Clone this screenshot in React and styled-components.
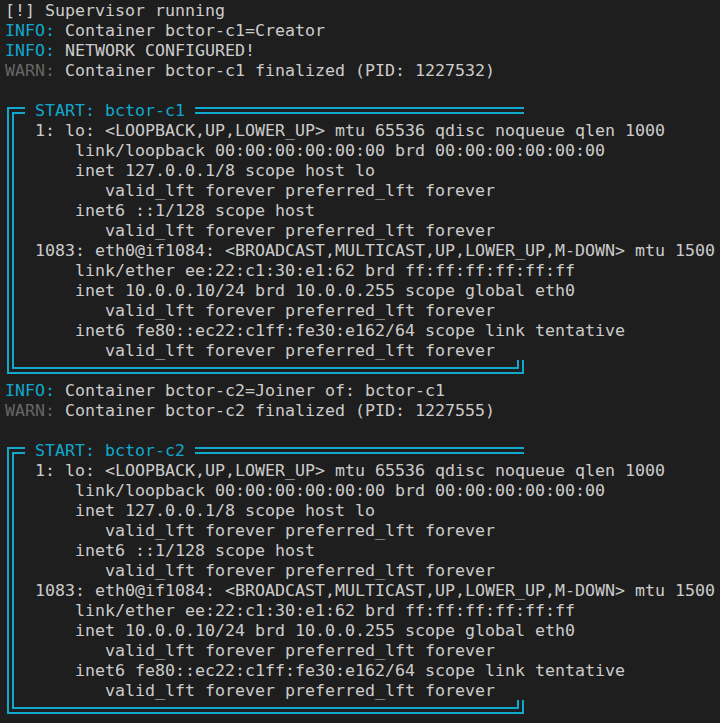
import React from "react";
import styled, { createGlobalStyle } from "styled-components";

const CYAN = "#11a8cd";

const GlobalStyle = createGlobalStyle`
  html, body { margin: 0; padding: 0; background: #1e1e1e; }
`;

const Screen = styled.div`
  box-sizing: border-box;
  width: 720px;
  height: 723px;
  overflow: hidden;
  padding: 0 0 0 5px;
  background: #1e1e1e;
  color: #cccccc;
  font-family: "DejaVu Sans Mono", "Liberation Mono", monospace;
  font-size: 16.61px;
  line-height: 20px;
`;

const Line = styled.div`
  box-sizing: border-box;
  height: 20px;
  padding-top: 1px;
  white-space: pre;
`;

const Tag = styled.span`
  color: ${(p) => (p.$level === "warn" ? "#666666" : CYAN)};
`;

const Frame = styled.div`
  margin-left: 2px;
  width: 517px;
`;

const FrameHead = styled.div`
  display: flex;
  height: 20px;
`;

const Corner = styled.div`
  box-sizing: border-box;
  width: 18px;
  height: 13px;
  margin-top: 7px;
  border-top: 7px double ${CYAN};
  border-left: 7px double ${CYAN};
`;

const Title = styled.span`
  padding: 1px 10px 0;
  color: ${CYAN};
  white-space: pre;
`;

const Rule = styled.div`
  flex: 1;
  height: 0;
  margin-top: 7px;
  border-top: 7px double ${CYAN};
`;

const FrameBody = styled.div`
  border-left: 7px double ${CYAN};
  padding-left: 21px;
`;

const FrameFoot = styled.div`
  box-sizing: border-box;
  height: 14px;
  margin-bottom: 6px;
  border: 7px double ${CYAN};
  border-top: none;
`;

const ipLines = [
  "1: lo: <LOOPBACK,UP,LOWER_UP> mtu 65536 qdisc noqueue qlen 1000",
  "    link/loopback 00:00:00:00:00:00 brd 00:00:00:00:00:00",
  "    inet 127.0.0.1/8 scope host lo",
  "       valid_lft forever preferred_lft forever",
  "    inet6 ::1/128 scope host",
  "       valid_lft forever preferred_lft forever",
  "1083: eth0@if1084: <BROADCAST,MULTICAST,UP,LOWER_UP,M-DOWN> mtu 1500",
  "    link/ether ee:22:c1:30:e1:62 brd ff:ff:ff:ff:ff:ff",
  "    inet 10.0.0.10/24 brd 10.0.0.255 scope global eth0",
  "       valid_lft forever preferred_lft forever",
  "    inet6 fe80::ec22:c1ff:fe30:e162/64 scope link tentative",
  "       valid_lft forever preferred_lft forever",
];

function Log({ level, children }) {
  return (
    <Line>
      <Tag $level={level}>{level === "warn" ? "WARN:" : "INFO:"}</Tag> {children}
    </Line>
  );
}

function StartBox({ name, lines }) {
  return (
    <Frame>
      <FrameHead>
        <Corner />
        <Title>START: {name}</Title>
        <Rule />
      </FrameHead>
      <FrameBody>
        {lines.map((l, i) => (
          <Line key={i}>{l}</Line>
        ))}
      </FrameBody>
      <FrameFoot />
    </Frame>
  );
}

export default function App() {
  return (
    <>
      <GlobalStyle />
      <Screen>
        <Line>[!] Supervisor running</Line>
        <Log level="info">Container bctor-c1=Creator</Log>
        <Log level="info">NETWORK CONFIGURED!</Log>
        <Log level="warn">Container bctor-c1 finalized (PID: 1227532)</Log>
        <Line />
        <StartBox name="bctor-c1" lines={ipLines} />
        <Log level="info">Container bctor-c2=Joiner of: bctor-c1</Log>
        <Log level="warn">Container bctor-c2 finalized (PID: 1227555)</Log>
        <Line />
        <StartBox name="bctor-c2" lines={ipLines} />
      </Screen>
    </>
  );
}
